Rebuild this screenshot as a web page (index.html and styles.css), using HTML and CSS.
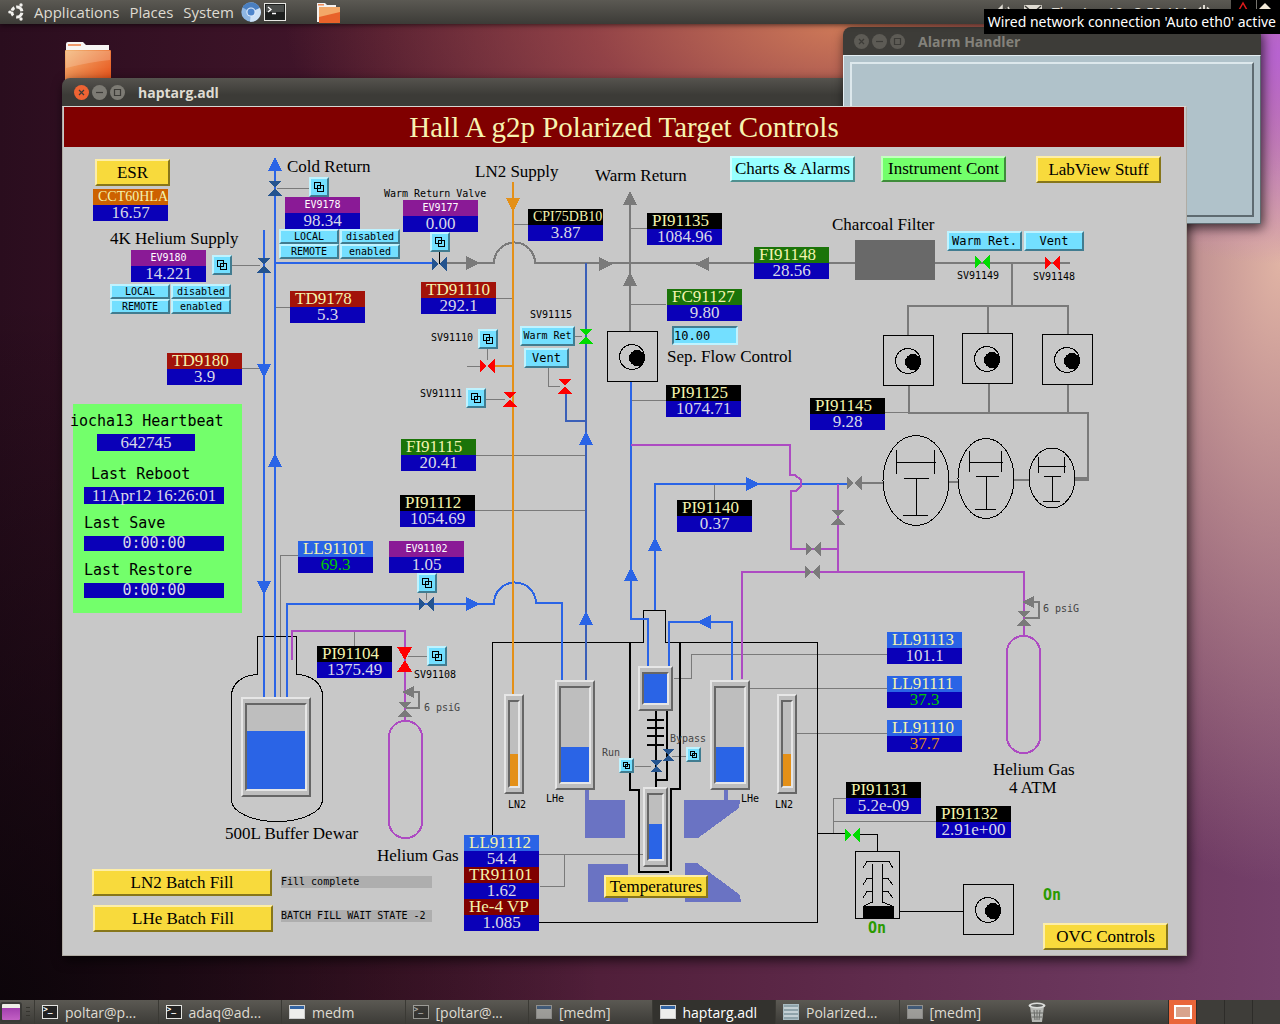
FILE: index.html
```html
<!DOCTYPE html>
<html lang="en">
  <head>
    <meta charset="UTF-8" />
    <meta name="viewport" content="width=device-width, initial-scale=1.0" />
    <title>haptarg.adl</title>
    <link rel="stylesheet" href="styles.css">
  </head>
  <body>
    <header class="panel top-panel">
      <svg class="logo" viewBox="0 0 18 18" width="18" height="18">
        <g fill="none" stroke="#f2f1ee" stroke-width="3">
          <path d="M6.4 4.6 A5 5 0 0 0 6.4 13.4" stroke-dasharray="4 1 4" />
          <path d="M8.2 4 A5 5 0 0 1 13.9 8.2" />
          <path d="M8.2 14 A5 5 0 0 0 13.9 9.8" />
        </g>
        <g fill="#f2f1ee">
          <circle cx="1.8" cy="9" r="1.6" />
          <circle cx="13" cy="2" r="1.7" />
          <circle cx="13" cy="16" r="1.7" />
        </g>
      </svg>
      <nav class="menus">
        <a href="#">Applications</a>
        <a href="#">Places</a>
        <a href="#">System</a>
      </nav>
      <button class="launcher" aria-label="Chromium">
        <svg viewBox="0 0 20 20" width="20" height="20">
          <circle cx="10" cy="10" r="9.7" fill="#8fb6e2" />
          <path d="M10 10 L1.5 5.5 A9.7 9.7 0 0 1 18.7 6 Z" fill="#4a7fc0" />
          <path d="M10 10 L19 6 A9.7 9.7 0 0 1 9 19.7 Z" fill="#cfe2f6" />
          <circle cx="10" cy="10" r="4.6" fill="#dfeafa" />
          <circle cx="10" cy="10" r="3.5" fill="#4f86cc" />
        </svg>
      </button>
      <button class="launcher" aria-label="Terminal">
        <svg viewBox="0 0 22 18" width="22" height="18">
          <rect x="0.5" y="0.5" width="21" height="17" fill="#1d1f1e" stroke="#e8e8e4" />
          <rect x="2" y="2" width="18" height="7" fill="#4a4d4b" />
          <path d="M4 4 L7 6.500 L4 9 M8 10.500 H12" fill="none" stroke="#fff" stroke-width="1.3" />
        </svg>
      </button>
      <button class="launcher folder-launcher" aria-label="Files">
        <svg viewBox="0 0 24 21" width="24" height="21">
          <path d="M1 20 V1 H9 L11 3 H20 V20 Z" fill="#f3f1f0" />
          <rect x="2" y="2" width="6" height="1.500" fill="#ee8b58" />
          <rect x="3" y="5" width="21" height="16" fill="#e8622a" />
          <path d="M3 5 H24 V10 L3 15 Z" fill="#f3a868" />
        </svg>
      </button>
      <div class="indicators">
        <svg viewBox="0 0 20 16" width="20" height="16" fill="none" stroke="#dfdbd2" stroke-width="1.500">
          <path d="M1 6 H4 L8 2 V14 L4 10 H1 Z" fill="#dfdbd2" />
          <path d="M11 5 Q13 8 11 11 M14 3 Q17 8 14 13" />
        </svg>
        <svg viewBox="0 0 18 14" width="18" height="14">
          <rect width="18" height="13" rx="1" fill="#dfdbd2" />
          <path d="M1 1 L9 8 L17 1" fill="none" stroke="#3c3b37" stroke-width="1.500" />
        </svg>
        <time>Thu Apr 19,&nbsp; 3:59 AM</time>
        <svg viewBox="0 0 14 14" width="14" height="14" fill="none" stroke="#dfdbd2" stroke-width="2">
          <path d="M4 2.500 A5.500 5.500 0 1 0 10 2.500 M7 0 V7" />
        </svg>
      </div>
      <div class="tray">
        <svg viewBox="0 0 49 24" width="49" height="24">
          <path d="M8 10 L12 3 L16 10 Z" fill="none" stroke="#e01b1b" stroke-width="1.500" />
          <path d="M25.500 0 V24" stroke="#77756f" />
          <path d="M27 10 L34 3 L41 10 Z" fill="#f2e9d8" />
        </svg>
      </div>
      <div class="tooltip" role="tooltip">Wired network connection 'Auto eth0' active</div>
    </header>

    <main class="desktop">
      <svg class="desk-folder" viewBox="0 0 48 46" width="48" height="46">
        <defs>
          <linearGradient id="folder" x1="0" y1="0" x2="1" y2="1">
            <stop offset="0" stop-color="#f3b878" />
            <stop offset="1" stop-color="#e6440c" />
          </linearGradient>
        </defs>
        <path d="M2 12 V2 Q2 0 4 0 H19 L22 3 H45 V12 Z" fill="#f7f5f3" />
        <rect x="4" y="2" width="13" height="2" fill="#ef9a6c" />
        <rect x="1" y="8" width="46" height="38" rx="1" fill="url(#folder)" />
        <path d="M2 9 H46 V18 Q26 20 2 26 Z" fill="#fff" opacity="0.180" />
      </svg>

      <section class="window alarm-window">
        <div class="titlebar inactive">
          <button class="wm" aria-label="Close alarms">
            <svg viewBox="0 0 15 15"><path d="M5 5 L10 10 M10 5 L5 10" /></svg>
          </button>
          <button class="wm" aria-label="Minimise alarms">
            <svg viewBox="0 0 15 15"><path d="M4 7.500 H11" /></svg>
          </button>
          <button class="wm" aria-label="Maximise alarms">
            <svg viewBox="0 0 15 15"><path d="M4.500 4.500 H10.500 V10.500 H4.500 Z" /></svg>
          </button>
          <h2>Alarm Handler</h2>
        </div>
        <div class="alarm-body">
          <div class="alarm-frame"><button class="alarm-button" aria-label="Open alarm tree"></button></div>
        </div>
      </section>

      <section class="window medm-window">
        <div class="titlebar">
          <button class="wm close" aria-label="Close">
            <svg viewBox="0 0 15 15"><path d="M5 5 L10 10 M10 5 L5 10" /></svg>
          </button>
          <button class="wm" aria-label="Minimise">
            <svg viewBox="0 0 15 15"><path d="M4 7.500 H11" /></svg>
          </button>
          <button class="wm" aria-label="Maximise">
            <svg viewBox="0 0 15 15"><path d="M4.500 4.500 H10.500 V10.500 H4.500 Z" /></svg>
          </button>
          <h2>haptarg.adl</h2>
        </div>

        <div class="screen">
          <h1>Hall A g2p Polarized Target Controls</h1>

          <div class="diagram">
            <svg class="piping" viewBox="64 147 1122 808" width="1122" height="808">
              <defs>
                <path id="valve-h" d="M-7.500 -7 L0 0 L-7.500 7 Z M7.500 -7 L0 0 L7.500 7 Z" />
                <path id="valve-v" d="M-7 -7.500 L0 0 L7 -7.500 Z M-7 7.500 L0 0 L7 7.500 Z" />
                <path id="up" d="M-7 14 L0 0 L7 14 Z" />
                <path id="down" d="M-7 -14 L0 0 L7 -14 Z" />
                <path id="right" d="M-14 -7 L0 0 L-14 7 Z" />
                <path id="left" d="M14 -7 L0 0 L14 7 Z" />
                <g id="pump">
                  <rect x="0.500" y="0.500" width="50" height="50" fill="none" stroke="#000" />
                  <circle cx="25" cy="26" r="12.500" fill="none" stroke="#000" />
                  <circle cx="30" cy="27" r="8" fill="#000" />
                </g>
              </defs>

              <!-- magnet coils -->
              <g fill="#6a73c3">
                <path d="M585 790 H589 V800 H625 V838 H585 Z" />
                <path d="M588 864 H628 V902 H588 Z" />
                <path d="M684 800 H724 V790 H728 V800 H740 L739 808 L698 838 H684 Z" />
                <path d="M685 863 H697 L740 895 L741 902 H685 Z" />
              </g>

              <!-- instrument leads -->
              <g class="lead">
                <path d="M232 265.500 H260" />
                <path d="M277 188.500 H309" />
                <path d="M276 307.500 H290" />
                <path d="M242 368.500 H260" />
                <path d="M513 224.500 H528" />
                <path d="M496 298.500 H512" />
                <path d="M467 366.500 H480" />
                <path d="M487.500 349 V360" />
                <path d="M486 399.500 H505" />
                <path d="M575 336.500 H582" />
                <path d="M548.500 368 V386.500 H560" />
                <path d="M631 228.500 H647" />
                <path d="M631 304.500 H666" />
                <path d="M631 400.500 H666" />
                <path d="M885 412.500 H909" />
                <path d="M476 455.500 H586" />
                <path d="M475 510.500 H586" />
                <path d="M714.500 484 V500" />
                <path d="M298 555.500 H280.500 V697" />
                <path d="M426.500 593 V600" />
                <path d="M354.500 632 V646" />
                <path d="M408 656.500 H427" />
                <path d="M635 766.500 H651" />
                <path d="M672 756.500 H686" />
                <path d="M674 678.500 H691.500 V654.500 H887" />
                <path d="M750 688.500 H887" />
                <path d="M797 733.500 H887" />
                <path d="M539 854.500 H643" />
                <path d="M564.500 855 V886.500 H540" />
                <path d="M846 798.500 H833.500 V834" />
                <path d="M833 821.500 H936" />
              </g>

              <!-- cryostat and dewar outlines -->
              <g class="outline">
                <path d="M492.500 835 V642.500 H643.500 V610.500 H665.500 V642.500 H817.500 V922.500 H539" />
                <path d="M257.500 674.500 V636.500 H296.500 V674.500 C312 675 322.500 684 322.500 696 V800 C322.500 812 302 821.500 277 821.500 C252 821.500 231.500 812 231.500 800 V696 C231.500 684 242 675 257.500 674.500" />
                <path d="M817 833.500 H846" />
                <path d="M858 834.500 H877.500 V851" />
                <path d="M439.500 252 V264" />
                <path d="M899 911.500 H963" />
              </g>
              <g class="wall">
                <path d="M630 643 V790 H639 V872 H669" />
                <path d="M680 643 V789 H671 V871" />
                <path d="M656 711 V787" />
                <path d="M667 711 V780 H656" />
                <path d="M647 720 H664 M647 728 H664 M647 736 H664 M647 745 H664" />
              </g>

              <!-- warm gas -->
              <g class="pipe gas">
                <path d="M447 263 H494 A20 20 0 0 1 535 263 H754" />
                <path d="M630 195 V331" />
                <path d="M829 263 H855 M935 263 H1070" />
                <path d="M1012 263 V306 M908 335 V306 H1068 V334 M988 306 V333" />
                <path d="M909 385 V413 M989 383 V413 M1068 384 V413 M908 413 H1088 V478 H1075" />
                <path d="M1075 480 H1089" />
                <path d="M862 483 H883 M949 482 H958 M1014 480 H1029" />
                <path d="M414 692 H419 V708 H406" />
                <path d="M1034 602 H1039 V618 H1025" />
              </g>

              <!-- helium -->
              <g class="pipe helium">
                <path d="M264 230 V697" />
                <path d="M275 168 V697" />
                <path d="M275 263 H433" />
                <path d="M287 697 V604 H494 A21 21 0 0 1 536 603 H562 V680" />
                <path d="M631 381 V619 H648 V666" />
                <path d="M655 610 V484 H848" />
                <path d="M669 666 V622 H732 V680" />
              </g>
              <g class="pipe return">
                <path d="M586 263 V680" />
                <path d="M566 393 V421 H586" />
              </g>
              <g class="pipe nitrogen">
                <path d="M513 182 V694" />
                <path d="M494 366 H513" />
              </g>
              <g class="pipe buffer">
                <path d="M292 660 V631 H405 V721" />
                <path d="M631 445 H790 V475 H795 L801 480 V486 L796 491 H791 V549 H838" />
                <path d="M838 484 V573" />
                <path d="M742 679 V572 H1024 V636" />
                <rect x="389" y="721" width="33" height="117" rx="16" />
                <rect x="1007" y="636" width="33" height="117" rx="16" />
              </g>

              <g fill="#696969">
                <rect x="855" y="240" width="80" height="40" />
              </g>

              <!-- flow arrows -->
              <g fill="#2a64e6">
                <use href="#up" x="275" y="157" />
                <use href="#up" x="275" y="453" />
                <use href="#down" x="264" y="378" />
                <use href="#down" x="264" y="595" />
                <use href="#up" x="586" y="431" />
                <use href="#up" x="586" y="611" />
                <use href="#up" x="631" y="567" />
                <use href="#up" x="655" y="537" />
                <use href="#right" x="480" y="604" />
                <use href="#right" x="760" y="484" />
                <use href="#left" x="697" y="622" />
              </g>
              <g fill="#7a7a7a">
                <use href="#right" x="480" y="263" />
                <use href="#right" x="613" y="264" />
                <use href="#up" x="630" y="191" />
                <use href="#up" x="630" y="272" />
                <use href="#left" x="695" y="264" />
                <path d="M402 692 L414 686 V698 Z M1022 602 L1034 596 V608 Z" />
                <use href="#valve-h" x="854" y="483" />
                <use href="#valve-v" x="838" y="517" />
                <use href="#valve-h" x="813" y="549" />
                <use href="#valve-h" x="812" y="572" />
                <use href="#valve-v" x="405" y="709" />
                <use href="#valve-v" x="1024" y="618" />
              </g>
              <use href="#down" x="513" y="212" fill="#e49018" />

              <!-- valves -->
              <g fill="#24548f">
                <use href="#valve-v" x="275" y="188" />
                <use href="#valve-v" x="264" y="265" />
                <use href="#valve-h" x="439" y="264" />
                <use href="#valve-h" x="426" y="604" />
                <path d="M650 760 H662 L656 766 L662 772 H650 L656 766 Z" />
                <path d="M662 749 H674 L668 755 L674 761 H662 L668 755 Z" />
              </g>
              <g fill="#f00">
                <use href="#valve-h" x="487" y="366" />
                <use href="#valve-v" x="510" y="399" />
                <use href="#valve-v" x="565" y="386" />
                <use href="#valve-h" x="1052" y="263" />
                <path d="M397 647 H412 L405 660 Z M397 672 H412 L405 660 Z" />
              </g>
              <g fill="#00dc00">
                <use href="#valve-v" x="586" y="336" />
                <use href="#valve-h" x="982" y="262" />
                <use href="#valve-h" x="852" y="835" />
              </g>

              <!-- pumps -->
              <use href="#pump" x="607" y="331" />
              <use href="#pump" x="883" y="335" />
              <use href="#pump" x="962" y="333" />
              <use href="#pump" x="1042" y="334" />
              <use href="#pump" x="963" y="884" />
              <g class="outline">
                <ellipse cx="916" cy="480.500" rx="33" ry="45" />
                <path d="M896.500 450 V474 M934.500 450 V474 M896 462.500 H936 M904 478.500 H929 M916.500 478 V515 M903 515.500 H928" />
                <ellipse cx="986" cy="478.500" rx="28" ry="40" />
                <path d="M969.500 451 V472 M1001.500 451 V472 M969 462.500 H1003 M976 476.500 H999 M986.500 476 V509 M975 509.500 H996" />
                <ellipse cx="1052" cy="478" rx="23" ry="30" />
                <path d="M1038.500 457 V473 M1064.500 457 V473 M1038 466.500 H1066 M1044 476.500 H1061 M1052.500 476 V501 M1043 501.500 H1060" />
                <rect x="855.500" y="851.500" width="44" height="67" />
                <path d="M863 868 L867 861.500 H889 L893 868 M872.500 864 V902 L864 906 M882.500 864 V902 L892 906" />
                <path d="M863 885 L867 878.500 H872 M863 898 L867 891.500 H872 M882 878.500 H888 L893 885 M882 891.500 H888 L893 898" />
                <path d="M863 906 H893 V918 H863 Z" fill="#000" />
              </g>

              <!-- labels -->
              <g class="label">
                <text x="110" y="244">4K Helium Supply</text>
                <text x="287" y="172">Cold Return</text>
                <text x="475" y="177">LN2 Supply</text>
                <text x="595" y="181">Warm Return</text>
                <text x="832" y="230">Charcoal Filter</text>
                <text x="225" y="839">500L Buffer Dewar</text>
                <text x="377" y="861">Helium Gas</text>
                <text x="993" y="775">Helium Gas</text>
                <text x="1009" y="793">4 ATM</text>
              </g>
              <g class="note">
                <text x="384" y="197">Warm Return Valve</text>
                <text x="431" y="341">SV91110</text>
                <text x="420" y="397">SV91111</text>
                <text x="530" y="318">SV91115</text>
                <text x="957" y="279">SV91149</text>
                <text x="1033" y="280">SV91148</text>
                <text x="414" y="678">SV91108</text>
                <text x="508" y="808">LN2</text>
                <text x="546" y="802">LHe</text>
                <text x="741" y="802">LHe</text>
                <text x="775" y="808">LN2</text>
              </g>
              <g class="note dim">
                <text x="424" y="711">6 psiG</text>
                <text x="1043" y="612">6 psiG</text>
                <text x="602" y="756">Run</text>
                <text x="670" y="742">Bypass</text>
              </g>
              <g class="state">
                <text x="868" y="933">On</text>
                <text x="1043" y="900">On</text>
              </g>
            </svg>

            <!-- tank levels -->
            <div class="tank tank-dewar"><div class="well"><div class="fill" style="height: 69%"></div></div></div>
            <div class="tank tank-ln2-left"><div class="well"><div class="fill ln2" style="height: 38%"></div></div></div>
            <div class="tank tank-lhe-left"><div class="well"><div class="fill" style="height: 37%"></div></div></div>
            <div class="tank tank-separator"><div class="well"><div class="fill" style="height: 100%"></div></div></div>
            <div class="tank tank-nose"><div class="well"><div class="fill" style="height: 55%"></div></div></div>
            <div class="tank tank-lhe-right"><div class="well"><div class="fill" style="height: 37%"></div></div></div>
            <div class="tank tank-ln2-right"><div class="well"><div class="fill ln2" style="height: 38%"></div></div></div>

            <!-- readouts -->
            <div class="readout cct60hla"><span class="tag orange long">CCT60HLA</span><output>16.57</output></div>
            <div class="readout ev9180"><span class="tag valve">EV9180</span><output>14.221</output></div>
            <div class="readout ev9178"><span class="tag valve">EV9178</span><output>98.34</output></div>
            <div class="readout ev9177"><span class="tag valve">EV9177</span><output>0.00</output></div>
            <div class="readout td9178"><span class="tag temp">TD9178</span><output>5.3</output></div>
            <div class="readout td9180"><span class="tag temp">TD9180</span><output>3.9</output></div>
            <div class="readout td91110"><span class="tag temp">TD91110</span><output>292.1</output></div>
            <div class="readout cpi75db10"><span class="tag long">CPI75DB10</span><output>3.87</output></div>
            <div class="readout pi91135"><span class="tag">PI91135</span><output>1084.96</output></div>
            <div class="readout fi91148"><span class="tag flow">FI91148</span><output>28.56</output></div>
            <div class="readout fc91127"><span class="tag flow">FC91127</span><output>9.80</output></div>
            <div class="readout pi91125"><span class="tag">PI91125</span><output>1074.71</output></div>
            <div class="readout pi91145"><span class="tag">PI91145</span><output>9.28</output></div>
            <div class="readout fi91115"><span class="tag flow">FI91115</span><output>20.41</output></div>
            <div class="readout pi91112"><span class="tag">PI91112</span><output>1054.69</output></div>
            <div class="readout pi91140"><span class="tag">PI91140</span><output>0.37</output></div>
            <div class="readout ll91101"><span class="tag level">LL91101</span><output class="ok">69.3</output></div>
            <div class="readout ev91102"><span class="tag valve">EV91102</span><output>1.05</output></div>
            <div class="readout pi91104"><span class="tag">PI91104</span><output>1375.49</output></div>
            <div class="readout ll91113"><span class="tag level">LL91113</span><output>101.1</output></div>
            <div class="readout ll91111"><span class="tag level">LL91111</span><output class="ok">37.3</output></div>
            <div class="readout ll91110"><span class="tag level">LL91110</span><output class="warn">37.7</output></div>
            <div class="readout pi91131"><span class="tag">PI91131</span><output>5.2e-09</output></div>
            <div class="readout pi91132"><span class="tag">PI91132</span><output>2.91e+00</output></div>
            <div class="readout nose-stack">
              <span class="tag level">LL91112</span><output>54.4</output>
              <span class="tag dark">TR91101</span><output>1.62</output>
              <span class="tag dark">He-4 VP</span><output>1.085</output>
            </div>

            <!-- related displays -->
            <button class="btn yellow esr">ESR</button>
            <button class="btn cyan charts">Charts &amp; Alarms</button>
            <button class="btn green instruments">Instrument Cont</button>
            <button class="btn yellow labview">LabView Stuff</button>
            <button class="btn yellow ln2-fill">LN2 Batch Fill</button>
            <button class="btn yellow lhe-fill">LHe Batch Fill</button>
            <button class="btn yellow temperatures">Temperatures</button>
            <button class="btn yellow ovc">OVC Controls</button>

            <!-- valve controls -->
            <div class="modes modes-ev9180">
              <button class="btn">LOCAL</button><button class="btn">disabled</button>
              <button class="btn">REMOTE</button><button class="btn">enabled</button>
            </div>
            <div class="modes modes-ev9178">
              <button class="btn">LOCAL</button><button class="btn">disabled</button>
              <button class="btn">REMOTE</button><button class="btn">enabled</button>
            </div>
            <button class="btn medium sv91115-warm">Warm Ret</button>
            <button class="btn medium sv91115-vent">Vent</button>
            <button class="btn medium sv91149-warm">Warm Ret.</button>
            <button class="btn medium sv91148-vent">Vent</button>
            <button class="btn popup popup-ev9180" aria-label="EV9180"><svg viewBox="0 0 10 10"><path d="M0.500 0.500 H6.500 V6.500 H0.500 Z M3.500 3.500 H9.500 V9.500 H3.500 Z" /></svg></button>
            <button class="btn popup popup-ev9178" aria-label="EV9178"><svg viewBox="0 0 10 10"><path d="M0.500 0.500 H6.500 V6.500 H0.500 Z M3.500 3.500 H9.500 V9.500 H3.500 Z" /></svg></button>
            <button class="btn popup popup-ev9177" aria-label="EV9177"><svg viewBox="0 0 10 10"><path d="M0.500 0.500 H6.500 V6.500 H0.500 Z M3.500 3.500 H9.500 V9.500 H3.500 Z" /></svg></button>
            <button class="btn popup popup-sv91110" aria-label="SV91110"><svg viewBox="0 0 10 10"><path d="M0.500 0.500 H6.500 V6.500 H0.500 Z M3.500 3.500 H9.500 V9.500 H3.500 Z" /></svg></button>
            <button class="btn popup popup-sv91111" aria-label="SV91111"><svg viewBox="0 0 10 10"><path d="M0.500 0.500 H6.500 V6.500 H0.500 Z M3.500 3.500 H9.500 V9.500 H3.500 Z" /></svg></button>
            <button class="btn popup popup-ev91102" aria-label="EV91102"><svg viewBox="0 0 10 10"><path d="M0.500 0.500 H6.500 V6.500 H0.500 Z M3.500 3.500 H9.500 V9.500 H3.500 Z" /></svg></button>
            <button class="btn popup popup-sv91108" aria-label="SV91108"><svg viewBox="0 0 10 10"><path d="M0.500 0.500 H6.500 V6.500 H0.500 Z M3.500 3.500 H9.500 V9.500 H3.500 Z" /></svg></button>
            <button class="btn popup small popup-run" aria-label="Run"><svg viewBox="0 0 7 7"><path d="M0.500 0.500 H4.500 V4.500 H0.500 Z M2.500 2.500 H6.500 V6.500 H2.500 Z" /></svg></button>
            <button class="btn popup small popup-bypass" aria-label="Bypass"><svg viewBox="0 0 7 7"><path d="M0.500 0.500 H4.500 V4.500 H0.500 Z M2.500 2.500 H6.500 V6.500 H2.500 Z" /></svg></button>

            <input class="setpoint" type="text" id="sepFlow" name="sepFlow" value="10.00" />
            <label class="setpoint-label" for="sepFlow">Sep. Flow Control</label>

            <p class="message message-ln2">Fill complete</p>
            <p class="message message-lhe">BATCH FILL WAIT STATE -2</p>

            <div class="ioc">
              <h3 class="heartbeat">iocha13 Heartbeat</h3>
              <output class="count">642745</output>
              <h3 class="reboot">Last Reboot</h3>
              <output class="tall">11Apr12 16:26:01</output>
              <h3>Last Save</h3>
              <output>0:00:00</output>
              <h3>Last Restore</h3>
              <output>0:00:00</output>
            </div>
          </div>
        </div>
      </section>
    </main>

    <footer class="panel taskbar">
      <button class="show-desktop" aria-label="Show desktop"></button>
      <span class="grip"></span>
      <div class="tasks">
        <button class="task"><span class="ico term">&gt;_</span>poltar@p...</button>
        <button class="task"><span class="ico term">&gt;_</span>adaq@ad...</button>
        <button class="task"><span class="ico win"></span>medm</button>
        <button class="task hidden-win"><span class="ico term">&gt;_</span>[poltar@...</button>
        <button class="task hidden-win"><span class="ico win"></span>[medm]</button>
        <button class="task active"><span class="ico win"></span>haptarg.adl</button>
        <button class="task"><span class="ico doc"></span>Polarized...</button>
        <button class="task hidden-win"><span class="ico win"></span>[medm]</button>
      </div>
      <button class="trash" aria-label="Trash">
        <svg viewBox="0 0 20 22" width="20" height="22">
          <path d="M3 5 H17 L15 21 H5 Z" fill="#b5b7b3" />
          <ellipse cx="10" cy="4.500" rx="8.500" ry="3" fill="#dcdedb" />
          <ellipse cx="10" cy="4.500" rx="6" ry="1.500" fill="#5d5f5c" />
          <path d="M7 9 L8 19 M10 9 V19 M13 9 L12 19 M4 12 H16 M5 16 H15" stroke="#6a6c69" fill="none" />
        </svg>
      </button>
      <div class="workspaces">
        <button class="current" aria-label="Workspace 1"><span></span></button>
        <button aria-label="Workspace 2"></button>
        <button aria-label="Workspace 3"></button>
        <button aria-label="Workspace 4"></button>
      </div>
    </footer>
  </body>
</html>
```
FILE: styles.css
```css
* {
  box-sizing: border-box;
}
body {
  margin: 0;
  min-height: 100vh;
  display: flex;
  flex-direction: column;
  font-family: "Open Sans", "Noto Sans", sans-serif;
  font-size: 14px;
  overflow: hidden;
}
h1, h2, h3, p {
  margin: 0;
  font-weight: normal;
}
button {
  font: inherit;
  color: inherit;
  margin: 0;
  padding: 0;
  border: 0;
  background: none;
  cursor: pointer;
}
svg {
  display: block;
}

/* desktop panels */
.panel {
  display: flex;
  align-items: center;
  height: 24px;
  color: #dfdbd2;
  background: linear-gradient(#5b5953, #3c3b37);
  position: relative;
  z-index: 5;
}
.top-panel {
  padding-left: 8px;
  box-shadow: 0 1px 5px rgba(0, 0, 0, 0.6);
}
.menus {
  display: flex;
  gap: 10px;
  margin: 0 7px 0 8px;
  font-size: 15px;
  line-height: 22px;
}
.menus a {
  color: inherit;
  text-decoration: none;
}
.launcher {
  margin-right: 3px;
}
.folder-launcher {
  margin-left: 27px;
}
.indicators {
  margin-left: auto;
  display: flex;
  align-items: center;
  gap: 10px;
  padding-right: 20px;
}
.tray {
  background: #000;
  width: 49px;
}
.tooltip {
  position: absolute;
  right: 0;
  top: 9px;
  height: 25px;
  line-height: 25px;
  padding: 0 4px;
  background: #000;
  color: #fff;
  font-family: "Noto Sans", sans-serif;
  white-space: nowrap;
}

.desktop {
  flex: 1;
  position: relative;
  min-height: 976px;
  background:
    radial-gradient(260px 210px at 100% 30px, #b763d0, transparent),
    radial-gradient(560px 240px at 66% 0, #cf7a58, rgba(190, 90, 80, 0.6) 45%, transparent),
    radial-gradient(300px 620px at 100% 240px, #e0b3a4, transparent),
    radial-gradient(600px 700px at 0 100%, rgba(5, 3, 5, 0.8), transparent),
    linear-gradient(90deg, #2a0d1e, #45162c 30%, #5a2645 60%, #74406a);
}
.desk-folder {
  position: absolute;
  left: 64px;
  top: 18px;
}

.window {
  position: absolute;
  border-radius: 8px 8px 0 0;
  box-shadow: 2px 4px 12px rgba(0, 0, 0, 0.7);
}
.medm-window {
  left: 62px;
  top: 54px;
}
/* covers the title bar of the medm window, but not its display */
.alarm-window {
  left: 843px;
  top: 3px;
  width: 418px;
  z-index: 1;
}
.titlebar {
  display: flex;
  align-items: center;
  gap: 3px;
  height: 28px;
  padding-left: 12px;
  border-radius: 8px 8px 0 0;
  background: linear-gradient(#55534e, #3c3b37 60%);
  color: #dfdbd2;
}
.titlebar h2 {
  font-size: 14px;
  font-weight: bold;
  margin-left: 10px;
}
.titlebar.inactive {
  padding-left: 11px;
  background: #3d3c38;
  color: #84827b;
}
.wm {
  width: 15px;
  height: 15px;
  border-radius: 50%;
  background: #7d7b74;
}
.wm svg {
  fill: none;
  stroke: #3c3b37;
  stroke-width: 1.2;
}
.wm.close {
  background: #ee6333;
}
.inactive .wm {
  background: #5d5b55;
}
.alarm-body {
  height: 169px;
  padding: 6px;
  background: #b0c2ca;
  border: 1px solid;
  border-color: #e4eef2 #5e6a70 #5e6a70 #e4eef2;
}
.alarm-frame {
  height: 100%;
  padding: 42px 0 0 217px;
  border: 2px solid;
  border-color: #dde8ec #5e6a70 #5e6a70 #dde8ec;
}
.alarm-button {
  display: block;
  width: 25px;
  height: 20px;
  border: 2px solid #6c767a;
}

/* medm display */
.screen {
  position: relative;
  z-index: 2;
  border: 1px solid #b0aca4;
  border-top-color: #d8d6d2;
  padding-left: 1px;
  background: #c8c8c8;
}
.screen h1 {
  height: 40px;
  margin-right: 2px;
  background: #800000;
  color: #f7f3b0;
  font-family: "Liberation Serif", serif;
  font-size: 29px;
  line-height: 40px;
  text-align: center;
}
.diagram {
  position: relative;
  font-family: "Liberation Serif", serif;
  font-size: 17px;
}
.piping {
  shape-rendering: crispEdges;
}
.lead {
  fill: none;
  stroke: #7a7a7a;
}
.outline {
  fill: none;
  stroke: #000;
}
.wall {
  fill: none;
  stroke: #000;
  stroke-width: 2;
}
.pipe {
  fill: none;
  stroke-width: 2;
}
.gas { stroke: #7a7a7a; }
.helium { stroke: #2a64e6; }
.return { stroke: #3a5fb8; }
.nitrogen { stroke: #e49018; }
.buffer { stroke: #ad4bc2; }
.note {
  font-family: "DejaVu Sans Mono", monospace;
  font-size: 10px;
}
.dim {
  fill: #444;
}
.state {
  fill: #2a9a00;
  font-family: "DejaVu Sans Mono", monospace;
  font-size: 15px;
  font-weight: bold;
}

.readout {
  position: absolute;
  width: 75px;
  line-height: 16px;
  color: #d8d8e8;
  white-space: nowrap;
}
.readout .tag {
  display: block;
  height: 16px;
  padding-left: 5px;
  background: #000;
  color: #f3f3ae;
}
.readout output {
  display: block;
  height: 16px;
  background: #0a00b8;
  text-align: center;
}
.readout .long {
  font-size: 14px;
}
.readout .valve {
  padding: 0;
  background: #8a1a96;
  color: #fff;
  font-family: "DejaVu Sans Mono", monospace;
  font-size: 10px;
  text-align: center;
}
.readout .orange { background: #cd6100; }
.readout .temp { background: #a2120a; }
.readout .dark { background: #800000; }
.readout .flow { background: #1b7409; }
.readout .level { background: #2a64e6; }
.readout .ok { color: #00c800; }
.readout .warn { color: #e49018; }

.cct60hla { left: 29px; top: 42px; }
.ev9180 { left: 67px; top: 103px; }
.ev9178 { left: 221px; top: 50px; }
.ev9177 { left: 339px; top: 53px; }
.td9178 { left: 226px; top: 144px; }
.td9180 { left: 103px; top: 206px; }
.td91110 { left: 357px; top: 135px; }
.cpi75db10 { left: 464px; top: 62px; }
.pi91135 { left: 583px; top: 66px; }
.fi91148 { left: 690px; top: 100px; }
.fc91127 { left: 603px; top: 142px; }
.pi91125 { left: 602px; top: 238px; }
.pi91145 { left: 746px; top: 251px; }
.fi91115 { left: 337px; top: 292px; }
.pi91112 { left: 336px; top: 348px; }
.pi91140 { left: 613px; top: 353px; }
.ll91101 { left: 234px; top: 394px; }
.ev91102 { left: 325px; top: 394px; }
.pi91104 { left: 253px; top: 499px; }
.ll91113 { left: 823px; top: 485px; }
.ll91111 { left: 823px; top: 529px; }
.ll91110 { left: 823px; top: 573px; }
.pi91131 { left: 782px; top: 635px; }
.pi91132 { left: 872px; top: 659px; }
.nose-stack { left: 400px; top: 688px; }

.tank {
  position: absolute;
  padding: 4px 2px;
  background: #bebebe;
  border: 2px solid;
  border-color: #e6e6e6 #666 #666 #e6e6e6;
}
.well {
  height: 100%;
  display: flex;
  align-items: flex-end;
  border: 2px solid;
  border-color: #666 #e6e6e6 #e6e6e6 #666;
}
.fill {
  width: 100%;
  background: #2a64e6;
}
.fill.ln2 {
  background: #e49018;
}
.tank-dewar { left: 177px; top: 550px; width: 70px; height: 100px; }
.tank-ln2-left { left: 440px; top: 547px; width: 20px; height: 100px; }
.tank-lhe-left { left: 491px; top: 533px; width: 40px; height: 110px; }
.tank-separator { left: 574px; top: 519px; width: 35px; height: 45px; }
.tank-nose { left: 579px; top: 640px; width: 25px; height: 80px; }
.tank-lhe-right { left: 646px; top: 533px; width: 40px; height: 110px; }
.tank-ln2-right { left: 713px; top: 547px; width: 20px; height: 100px; }

.btn {
  position: absolute;
  overflow: hidden;
  white-space: nowrap;
  background: #73dfff;
  border: 2px solid;
  border-color: #bff3ff #417c90 #417c90 #bff3ff;
  color: #000;
  line-height: 16px;
}
.btn.yellow {
  background: #f8da3c;
  border-color: #fdeea8 #87761a #87761a #fdeea8;
}
.btn.cyan {
  background: #97ffff;
  border-color: #d0ffff #4f9090 #4f9090 #d0ffff;
}
.btn.green {
  background: #73ff6b;
  border-color: #c4ffc0 #3f8c3a #3f8c3a #c4ffc0;
}
.esr { left: 31px; top: 12px; width: 75px; height: 27px; }
.charts { left: 666px; top: 9px; width: 125px; height: 26px; }
.instruments { left: 817px; top: 9px; width: 125px; height: 26px; }
.labview { left: 972px; top: 9px; width: 125px; height: 27px; }
.ln2-fill { left: 28px; top: 722px; width: 180px; height: 27px; }
.lhe-fill { left: 29px; top: 758px; width: 180px; height: 27px; }
.temperatures { left: 540px; top: 728px; width: 104px; height: 23px; }
.ovc { left: 979px; top: 776px; width: 125px; height: 27px; }

.modes {
  position: absolute;
  display: grid;
  grid-template-columns: 60px 60px;
  grid-auto-rows: 15px;
  column-gap: 1px;
}
.modes .btn {
  position: static;
  font-family: "DejaVu Sans Mono", monospace;
  font-size: 10px;
  line-height: 11px;
}
.modes-ev9180 { left: 46px; top: 137px; }
.modes-ev9178 { left: 215px; top: 82px; }

.btn.medium {
  height: 20px;
  font-family: "DejaVu Sans Mono", monospace;
  font-size: 12px;
}
.btn.sv91115-warm { left: 456px; top: 179px; width: 55px; font-size: 10px; }
.btn.sv91115-vent { left: 460px; top: 201px; width: 45px; }
.btn.sv91149-warm { left: 883px; top: 84px; width: 75px; }
.btn.sv91148-vent { left: 960px; top: 84px; width: 60px; }

.popup {
  width: 20px;
  height: 20px;
  padding: 3px;
}
.popup svg {
  fill: none;
  stroke: #000;
  shape-rendering: crispEdges;
}
.popup.small {
  width: 15px;
  height: 15px;
  padding: 2px;
}
.popup-ev9180 { left: 148px; top: 108px; }
.popup-ev9178 { left: 245px; top: 30px; }
.popup-ev9177 { left: 366px; top: 85px; }
.popup-sv91110 { left: 414px; top: 182px; }
.popup-sv91111 { left: 402px; top: 241px; }
.popup-ev91102 { left: 353px; top: 426px; }
.popup-sv91108 { left: 363px; top: 499px; }
.popup-run { left: 555px; top: 611px; }
.popup-bypass { left: 622px; top: 600px; }

.setpoint {
  position: absolute;
  left: 608px;
  top: 179px;
  width: 66px;
  height: 19px;
  padding: 0;
  background: #73dfff;
  border: 2px solid;
  border-color: #417c90 #bff3ff #bff3ff #417c90;
  border-radius: 0;
  font-family: "DejaVu Sans Mono", monospace;
  font-size: 12px;
}
.setpoint-label {
  position: absolute;
  left: 603px;
  top: 200px;
}
.message {
  position: absolute;
  left: 217px;
  width: 151px;
  height: 12px;
  background: #aeaeae;
  font-family: "DejaVu Sans Mono", monospace;
  font-size: 10px;
  line-height: 11px;
}
.message-ln2 { top: 729px; }
.message-lhe { top: 763px; }

.ioc {
  position: absolute;
  left: 9px;
  top: 257px;
  width: 169px;
  padding: 7px 18px 15px 11px;
  background: #73ff6b;
  white-space: nowrap;
}
.ioc h3 {
  font-family: "DejaVu Sans Mono", monospace;
  font-size: 15px;
  line-height: 20px;
  margin-top: 9px;
}
.ioc .heartbeat {
  margin: 0 0 3px -14px;
}
.ioc .reboot {
  margin-top: 13px;
  padding-left: 7px;
}
.ioc output {
  display: block;
  height: 15px;
  margin-top: 3px;
  background: #0a00b8;
  color: #d8d8e8;
  font-family: "DejaVu Sans Mono", monospace;
  font-size: 15px;
  line-height: 15px;
  text-align: center;
}
.ioc .count,
.ioc .tall {
  height: 17px;
  font-family: "Liberation Serif", serif;
  font-size: 17px;
  line-height: 17px;
}
.ioc .count {
  margin: 0 29px 0 13px;
}

/* taskbar */
.show-desktop {
  width: 22px;
  height: 20px;
  border: 2px solid #3a3936;
  border-radius: 3px;
  background: linear-gradient(#efeee6 4px, #a33fae 4px, #c260c4);
}
.grip {
  width: 4px;
  height: 10px;
  margin: 0 4px;
  background: repeating-linear-gradient(#35342f 0 1px, transparent 1px 4px);
}
.tasks {
  display: flex;
  flex: 0 1 988px;
  min-width: 0;
}
.task {
  flex: 1;
  min-width: 0;
  display: flex;
  align-items: center;
  gap: 7px;
  height: 24px;
  padding-left: 7px;
  border-left: 1px solid #3a3934;
  overflow: hidden;
  white-space: nowrap;
}
.task.active {
  background: #33322e;
  color: #fff;
}
.task.hidden-win .ico {
  opacity: 0.5;
}
.ico {
  flex: none;
  width: 16px;
  height: 14px;
  border: 1px solid #e4e4e0;
}
.ico.term {
  background: #222;
  color: #fff;
  font: bold 8px/8px "DejaVu Sans Mono", monospace;
  text-align: left;
}
.ico.win {
  border-color: #ccc;
  background: linear-gradient(#3465a4 3px, #eeeeec 3px);
}
.ico.doc {
  height: 16px;
  border-color: #a9bcc2;
  background: repeating-linear-gradient(#8fa3aa 0 2px, #c4d0d4 2px 4px);
}
.trash {
  margin-left: 5px;
}
.workspaces {
  display: flex;
  margin-left: auto;
  height: 24px;
}
.workspaces button {
  width: 28px;
  border-left: 1px solid #2d2c29;
  background: #3e3d39;
}
.workspaces .current {
  padding: 3px;
  background: #e9663a;
}
.workspaces .current span {
  display: block;
  width: 18px;
  height: 14px;
  margin: 0 auto;
  border: 2px solid #fff;
  background: #d9a38c;
}
```
